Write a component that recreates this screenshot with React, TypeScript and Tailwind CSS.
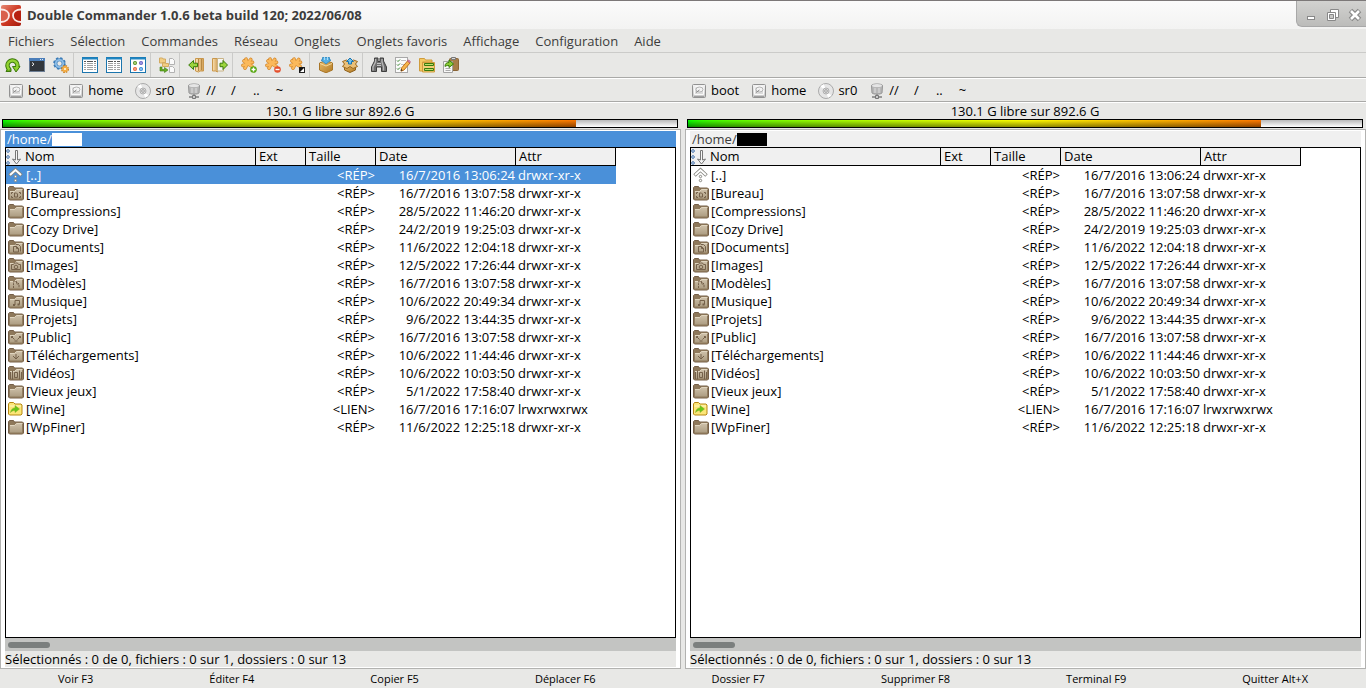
import type { ReactNode } from "react";
import clsx from "clsx";

type Entry = {
  name: string;
  size: string;
  date: string;
  attr: string;
  icon: string;
};

const dir = (name: string, date: string, icon = "plain"): Entry => ({
  name,
  size: "<RÉP>",
  date,
  attr: "drwxr-xr-x",
  icon,
});

const entries: Entry[] = [
  dir("..", "16/7/2016 13:06:24", "up"),
  dir("Bureau", "16/7/2016 13:07:58", "desktop"),
  dir("Compressions", "28/5/2022 11:46:20"),
  dir("Cozy Drive", "24/2/2019 19:25:03"),
  dir("Documents", "11/6/2022 12:04:18", "documents"),
  dir("Images", "12/5/2022 17:26:44", "pictures"),
  dir("Modèles", "16/7/2016 13:07:58", "templates"),
  dir("Musique", "10/6/2022 20:49:34", "music"),
  dir("Projets", "9/6/2022 13:44:35"),
  dir("Public", "16/7/2016 13:07:58", "public"),
  dir("Téléchargements", "10/6/2022 11:44:46", "download"),
  dir("Vidéos", "10/6/2022 10:03:50", "videos"),
  dir("Vieux jeux", "5/1/2022 17:58:40"),
  {
    name: "Wine",
    size: "<LIEN>",
    date: "16/7/2016 17:16:07",
    attr: "lrwxrwxrwx",
    icon: "link",
  },
  dir("WpFiner", "11/6/2022 12:25:18"),
];

const menus = [
  "Fichiers",
  "Sélection",
  "Commandes",
  "Réseau",
  "Onglets",
  "Onglets favoris",
  "Affichage",
  "Configuration",
  "Aide",
];

const functionKeys = [
  "Voir F3",
  "Éditer F4",
  "Copier F5",
  "Déplacer F6",
  "Dossier F7",
  "Supprimer F8",
  "Terminal F9",
  "Quitter Alt+X",
];

function Svg({ children }: { children: ReactNode }) {
  return (
    <svg width="16" height="16" viewBox="0 0 16 16" fill="none" className="block shrink-0" aria-hidden="true">
      {children}
    </svg>
  );
}

// Shared gradients for every icon on the page
function IconDefs() {
  return (
    <svg width="0" height="0" className="absolute" aria-hidden="true">
      <defs>
        <linearGradient id="folder" x1="0" y1="0" x2="0" y2="1">
          <stop offset="0" stopColor="#d0c3ac" />
          <stop offset="1" stopColor="#ab9b80" />
        </linearGradient>
        <linearGradient id="logo" x1="0" y1="0" x2="1" y2="1">
          <stop offset="0" stopColor="#e58a75" />
          <stop offset="0.5" stopColor="#cf3a24" />
          <stop offset="1" stopColor="#a51a0c" />
        </linearGradient>
        <linearGradient id="box" x1="0" y1="0" x2="1" y2="1">
          <stop offset="0" stopColor="#e9bd6b" />
          <stop offset="1" stopColor="#b27a24" />
        </linearGradient>
        <linearGradient id="metal" x1="0" y1="0" x2="0" y2="1">
          <stop offset="0" stopColor="#f5f5f5" />
          <stop offset="1" stopColor="#c4c4c4" />
        </linearGradient>
        <linearGradient id="page" x1="0" y1="0" x2="1" y2="0">
          <stop offset="0" stopColor="#fbe3b4" />
          <stop offset="1" stopColor="#d2a057" />
        </linearGradient>
      </defs>
    </svg>
  );
}

function ListIcon({ kind }: { kind: "brief" | "columns" | "thumbs" }) {
  return (
    <Svg>
      <rect x="0.5" y="0.5" width="15" height="15" fill="#fff" stroke="#1b75ad" />
      <path d="M0 1.5h16" stroke="#1f86c2" strokeWidth="2" />
      {kind === "thumbs" ? (
        <>
          <rect x="3.5" y="4.5" width="3" height="3" rx="1" fill="#a3c96a" stroke="#4d8a22" />
          <rect x="9.5" y="4.5" width="3" height="3" rx="1" fill="#9293e0" stroke="#6a5cbe" />
          <rect x="3.5" y="10.5" width="3" height="3" rx="1" fill="#f59b78" stroke="#e8603f" />
          <rect x="9.5" y="10.5" width="3" height="3" rx="1" fill="#83bdf0" stroke="#2f83d3" />
        </>
      ) : (
        <>
          <path
            d="M2 4.5h12"
            stroke="#555"
            strokeDasharray={kind === "brief" ? "2 1 6 1" : "5 1 2 1"}
          />
          <path
            d="M2 6.5h12M2 8.5h12M2 10.5h12M2 12.5h12"
            stroke="#a2a2a2"
            strokeDasharray={kind === "brief" ? "2 1 6 1" : "5 1 2 1"}
          />
        </>
      )}
    </Svg>
  );
}

function Asterisk({ children }: { children: ReactNode }) {
  return (
    <Svg>
      <path
        d="M3 4l3.500 2.500 3.200-4M2 8.500l4.500-2 5-1.200M4 11.200l2.500-4.700 4.500 2.800M5 2.200l1.500 4.300"
        stroke="#d48a30"
        strokeWidth="3.600"
        strokeLinecap="round"
      />
      <path
        d="M3 4l3.500 2.500 3.200-4M2 8.500l4.500-2 5-1.200M4 11.200l2.500-4.700 4.500 2.800M5 2.200l1.500 4.300"
        stroke="#fbb95b"
        strokeWidth="2.200"
        strokeLinecap="round"
      />
      {children}
    </Svg>
  );
}

const toolbar: { label: string; icon: ReactNode }[][] = [
  [
    {
      label: "Actualiser",
      icon: (
        <Svg>
          <path d="M4.500 12.500A5 5 0 1 1 11 12" stroke="#3d7a0c" strokeWidth="4.400" />
          <path d="M7.500 9.500H15L11 15z" fill="#86c926" stroke="#3d7a0c" />
          <path d="M1 14.500h5v-3L3 11z" fill="#68a81a" stroke="#3d7a0c" />
          <path d="M4.500 12.500A5 5 0 1 1 11 12" stroke="#92d332" strokeWidth="2.400" />
        </Svg>
      ),
    },
    {
      label: "Terminal",
      icon: (
        <Svg>
          <rect x="0.5" y="1.5" width="15" height="13" fill="#31363c" stroke="#6d7f95" />
          <path d="M0 2.5h16" stroke="#4b7eb9" strokeWidth="3" />
          <path d="M11 2.5h1M13 2.5h1" stroke="#d9e7f5" />
          <path d="m3 5.500 2 1.700-2 1.700" stroke="#f4f4f4" />
        </Svg>
      ),
    },
    {
      label: "Options",
      icon: (
        <Svg>
          <circle cx="6.500" cy="6.500" r="5" stroke="#3b7cb8" strokeWidth="2.600" strokeDasharray="2.200 1.730" />
          <circle cx="6.500" cy="6.500" r="3.700" fill="#e8e8e6" stroke="#3b7cb8" strokeWidth="3" />
          <circle cx="6.500" cy="6.500" r="3.700" stroke="#8fbfe8" strokeWidth="1.800" />
          <circle cx="12" cy="12" r="3" stroke="#c97f1c" strokeWidth="2" strokeDasharray="1.500 .86" />
          <circle cx="12" cy="12" r="2" fill="#fff4dc" stroke="#f4ac43" strokeWidth="1.800" />
        </Svg>
      ),
    },
  ],
  [
    { label: "Vue abrégée", icon: <ListIcon kind="brief" /> },
    { label: "Vue détaillée", icon: <ListIcon kind="columns" /> },
    { label: "Vignettes", icon: <ListIcon kind="thumbs" /> },
  ],
  [
    {
      label: "Vue à plat",
      icon: (
        <Svg>
          <path d="M.5 1v5h6V2H4l-.500-1zM3.500 5.500v4h6v-3h-3l-.500-1z" fill="#f2ce84" stroke="#d3ab62" />
          <path d="M10.500 1.500h3l2 2v4h-5zM10.500 9.500h3l2 2v4h-5z" fill="#fafafa" stroke="#b2b2b2" />
          <path d="M1 10h2v2.500h2.500v-2L9 13l-3.500 2.500V14H1z" fill="#65ae22" stroke="#3d7c10" strokeWidth=".6" />
        </Svg>
      ),
    },
  ],
  [
    {
      label: "Cible à gauche",
      icon: (
        <Svg>
          <path d="M7.500 1.500h8V14H12l-1.500 1-3-1z" fill="url(#page)" stroke="#c9974c" />
          <path d="M10.500 2v12M13.500 2v11" stroke="#b58844" />
          <path d="M.7 8 5.500 3.500v2.700h4v3.500h-4v2.800z" fill="#9cd53d" stroke="#3b7b0c" />
        </Svg>
      ),
    },
    {
      label: "Cible à droite",
      icon: (
        <Svg>
          <path d="M.5 1.500h5V15l-2-1h-3z" fill="url(#page)" stroke="#c9974c" />
          <path d="M5.500 1.500h6V14h-6z" fill="#f6f6f2" stroke="#c8b387" />
          <path d="M15.500 8 11 3.500v2.700H8v3.500h3v2.800z" fill="#9cd53d" stroke="#3b7b0c" />
        </Svg>
      ),
    },
  ],
  [
    {
      label: "Sélectionner un groupe",
      icon: (
        <Asterisk>
          <circle cx="12.500" cy="12.500" r="3.300" fill="#55a60e" />
          <path d="M12.500 10.500v4M10.500 12.500h4" stroke="#fff" strokeWidth="1.400" />
        </Asterisk>
      ),
    },
    {
      label: "Désélectionner un groupe",
      icon: (
        <Asterisk>
          <circle cx="12.500" cy="12.500" r="3.300" fill="#e4512e" />
          <path d="M10.500 12.500h4" stroke="#fff" strokeWidth="1.400" />
        </Asterisk>
      ),
    },
    {
      label: "Inverser la sélection",
      icon: (
        <Asterisk>
          <rect x="10.500" y="10.500" width="5" height="5" fill="#fff" stroke="#222" />
          <path d="M10.500 10.500h5l-5 5z" fill="#111" />
        </Asterisk>
      ),
    },
  ],
  [
    {
      label: "Compresser",
      icon: (
        <Svg>
          <path d="M1.500 6 8 3.500 14.500 6v7L8 15.800 1.500 13z" fill="url(#box)" stroke="#a87527" />
          <path d="M2 6.500 8 9l6-2.500" stroke="#f6d99b" />
          <path d="M4.500 .5h7V3H13L8 7 3 3h1.500z" fill="#57b1e5" stroke="#3f92c6" />
          <path d="M6.500 0v3M9.500 0v3" stroke="#a9dbf5" />
        </Svg>
      ),
    },
    {
      label: "Extraire",
      icon: (
        <Svg>
          <path d="M2.500 6.500h11V13L8 15.500 2.500 13z" fill="url(#box)" stroke="#8f601b" />
          <path d="m.5 4.500 4-1.500L8 5l3.500-2 4 1.500-2 2.500 2 2.500L11 11.500 8 9.500l-3 2-4.500-2 2-2.500z" fill="#ebc078" stroke="#9c6a20" />
          <path d="m8 1 3.500 3.500h-2V7h-3V4.500h-2z" fill="#6bc0ef" stroke="#1d73ac" />
        </Svg>
      ),
    },
  ],
  [
    {
      label: "Rechercher",
      icon: (
        <Svg>
          <path
            d="M3.500 1H7v3.500h2V1h3.500v3l3 6v4.500h-5V10h-5v4.500h-5V10l3-6z"
            fill="#707070"
            stroke="#3f3f3f"
          />
          <path d="M4.500 2v3L2 10v3.500M11 2v3l1.500 5v3.500" stroke="#b8b8b8" strokeWidth="1.300" />
          <path d="M6 6.500h4M6 8.500h4" stroke="#c6c6c6" />
        </Svg>
      ),
    },
    {
      label: "Renommer par lot",
      icon: (
        <Svg>
          <rect x=".5" y=".5" width="12" height="15" fill="#fbfbfb" stroke="#a8a8a8" />
          <path d="m2 3.500 1 1 2-2M2 7.500l1 1 2-2M2 11.500l1 1 2-2" stroke="#348129" />
          <path d="M6.500 3.500H11M6.500 7.500H9" stroke="#878787" strokeDasharray="1 1" />
          <path d="m6.500 11 6-7 2.500 2-6 7-3 1.200z" fill="#f6b64e" stroke="#c1711d" />
          <path d="m12.500 4 1-1 2 1.800-.8 1z" fill="#eb9bb3" stroke="#b95b81" />
          <path d="m6.200 12-.5 2 2-.7z" fill="#222" />
        </Svg>
      ),
    },
    {
      label: "Synchroniser",
      icon: (
        <Svg>
          <path d="M.5 1.500h5L6.500 3H13v2H3.500v9h-3z" fill="#f5c963" stroke="#cf9c3c" />
          <path d="M3.500 5.500h12V15h-12z" fill="#f2cf77" stroke="#cf9c3c" />
          <path d="M5.500 6.500h9v2h-9zM5.500 11.500h9v2h-9z" fill="#bce16e" stroke="#397b0d" />
        </Svg>
      ),
    },
    {
      label: "Copier les noms",
      icon: (
        <Svg>
          <rect x="6.500" y="1.500" width="9" height="12" rx="1" fill="#a77d48" stroke="#8a6436" />
          <path d="M8.500 .5h4v2h-4z" fill="#d8d8d8" stroke="#777" />
          <path d="M.5 4.500h9v11h-9z" fill="#f8f8f8" stroke="#a3a3a3" />
          <path d="M2.500 11.500h5M2.500 13.500h5" stroke="#aaa" />
          <path d="M2 9.500C2 6.500 3.500 5.500 6 5.500V3l4.500 4L6 10.500v-2c-2 0-3 .2-4 1z" fill="#8bcc35" stroke="#377b0b" />
        </Svg>
      ),
    },
  ],
];

function DiskIcon() {
  return (
    <Svg>
      <rect x="1.500" y="1.500" width="13" height="13" rx="1" fill="url(#metal)" stroke="#929292" />
      <path d="M3.500 11.500v-6l1-2h7l1 2v6z" fill="#dcdcdc" stroke="#fafafa" />
      <ellipse cx="8.500" cy="6.500" rx="3.500" ry="2.500" fill="#f3f3f3" stroke="#b4b4b4" />
      <path d="M5 9.500 8.500 7" stroke="#888" />
      <path d="M3 13.500h10" stroke="#a0a0a0" />
    </Svg>
  );
}

function DiscIcon() {
  return (
    <Svg>
      <circle cx="8" cy="8" r="7.500" fill="#e6e6e6" stroke="#aaa" />
      <path d="M8 8 2.500 3.500A7 7 0 0 1 6 1.300zM8 8l5.500 4.500A7 7 0 0 1 10 14.700z" fill="#fff" />
      <circle cx="8" cy="8" r="3" fill="#ddd" stroke="#b0b0b0" />
      <circle cx="8" cy="8" r="1.300" fill="#fff" stroke="#999" />
    </Svg>
  );
}

function NetworkIcon() {
  return (
    <Svg>
      <path d="M2.500 2.500c0-2 11-2 11 0L13 10c-1 1.500-9 1.500-10 0z" fill="#b8b8b8" stroke="#949494" />
      <ellipse cx="8" cy="2.500" rx="5" ry="1.500" fill="#e5e5e5" />
      <path d="M6 5v5M10 5v5" stroke="#dedede" />
      <path d="M8 11v2M3 14h10" stroke="#999" strokeWidth="2" />
      <path d="M6.500 12.500h3v3h-3z" fill="#ccc" stroke="#777" />
    </Svg>
  );
}

const folderMarks: Record<string, ReactNode> = {
  desktop: <path d="M3.500 9V7.500H5M3.500 11v1.500H5M11 7.500h1.500V9M12.500 11v1.500H11M6.500 8h2l1 1v3h-3z" />,
  documents: <path d="M7.500 5.500h3l2 2v5M5.500 7.500h3l2 2V13h-5zM8.500 7.500v2h2" />,
  pictures: (
    <>
      <path d="M3.500 7.500h2l1-1.500h3l1 1.500h2v5h-9z" />
      <circle cx="8" cy="10" r="1.800" />
    </>
  ),
  templates: <path d="M5.500 13V6.500h3l2.500 2.500v4M8.500 6.500V9H11" strokeDasharray="2 .8" />,
  music: (
    <>
      <path d="M7 12V7.500h4.500v4" />
      <path d="M5 12h2M9.500 11.500h2" strokeWidth="1.800" />
    </>
  ),
  public: <path d="M3.500 9V7.500H5M3.500 7.500l3 3M12.500 9V7.500H11M12.500 7.500l-3 3M6.500 12h3" />,
  download: <path d="M8 7v4.500M5 9l3 3 3-3" />,
  videos: <path d="M4.500 5.500v9M11.500 5.500v9M6.500 7.500h3v5h-3zM2.500 7v7M13.500 7v7" />,
};

function EntryIcon({ kind }: { kind: string }) {
  if (kind === "up") {
    return (
      <Svg>
        <path d="m1.500 8.500 6-5.500 6 5.500" stroke="#84847e" strokeWidth="3.600" />
        <path d="m2 8 5.500-5L13 8" stroke="#fff" strokeWidth="2" />
        <circle cx="7.500" cy="9.500" r="1.200" fill="#fff" stroke="#84847e" />
        <circle cx="7.500" cy="13.500" r="1.200" fill="#fff" stroke="#84847e" />
      </Svg>
    );
  }
  if (kind === "link") {
    return (
      <Svg>
        <path d="M.5 13V3l1-1.500h4L7 3h6l1 1v9l-1 1H1.500z" fill="#fce678" stroke="#b78712" />
        <path d="M1.500 5H13" stroke="#fff7c2" />
        <path
          d="M2.500 11.500C3 8.500 4.500 7 7 7V4.500L11.500 8 7 11.500v-2c-2 0-3 .5-4.500 2z"
          fill="#68c617"
          stroke="#80aa26"
          strokeWidth=".5"
        />
      </Svg>
    );
  }
  return (
    <Svg>
      <path d="M.5 14V2.500l1-1h4l1 1.500h8l1 1V14l-1 1h-13z" fill="#8e785a" stroke="#766049" />
      <path d="M1.500 14V7l1.500-1h3l2-2h6.500v10z" fill="url(#folder)" stroke="#917c5e" />
      <path d="M2 6.500h4.500l2-2h6" stroke="#e0d5bf" />
      <g stroke="#75614a">{folderMarks[kind]}</g>
    </Svg>
  );
}

function SortIcon() {
  return (
    <Svg>
      <g fill="#fff" stroke="#3c6ca8">
        <circle cx="2" cy="2" r="1.300" />
        <circle cx="2" cy="8" r="1.300" />
        <circle cx="2" cy="14" r="1.300" />
      </g>
      <path d="M9.500 1.500h2v9.500l3-1-4 5-4-5 3 1z" fill="#f6f6f6" stroke="#777" />
    </Svg>
  );
}

function Drives() {
  const drive = "flex h-5 items-center gap-1";
  return (
    <nav className="flex items-center gap-3 pt-px pl-2 text-black">
      <button className={drive}>
        <DiskIcon />
        boot
      </button>
      <button className={drive}>
        <DiskIcon />
        home
      </button>
      <button className={drive}>
        <DiscIcon />
        sr0
      </button>
      <button className={drive}>
        <NetworkIcon />
        //
      </button>
      <button className="w-[11px]">/</button>
      <button className="w-[11px]">..</button>
      <button className="w-[11px]">~</button>
    </nav>
  );
}

function FreeSpace({ free, total }: { free: number; total: number }) {
  const used = Math.floor(((total - free) / total) * 100);
  return (
    <div className="pr-[3px] pl-0.5">
      <p className="h-4 text-center leading-4">
        {free} G libre sur {total} G
      </p>
      <div className="relative h-[9px] border border-black bg-linear-to-r from-[#00ff00] via-[#ffff00] to-[#ff1400]">
        <div className="absolute inset-0 bg-linear-to-b from-black/0 to-black/45" />
        <div
          className="absolute inset-y-0 right-0 bg-linear-to-b from-[#b9b9b9] to-white"
          style={{ width: `${100 - used}%` }}
        />
      </div>
    </div>
  );
}

function FilePanel({ active = false }: { active?: boolean }) {
  const cell = "h-[18px] truncate p-0 leading-[18px]";
  const head = "h-[18px] border-r border-b border-black p-0 pl-[3px] text-left leading-[17px] font-normal";
  return (
    <section className="flex min-h-0 min-w-0 flex-col border border-[#b2b2b0] bg-white px-1 py-px">
      <div
        className={clsx(
          "flex h-4 shrink-0 items-center pl-0.5 leading-4",
          active ? "bg-[#4a90d9] text-white" : "bg-[#f0f0f0] text-[#3c3c3c]"
        )}
      >
        /home/
        <span className={clsx("h-[13px] w-[30px]", active ? "bg-white" : "bg-black")} />
      </div>

      <div className="min-h-0 flex-1 overflow-hidden border border-black bg-white">
        <table className="w-[610px] table-fixed border-separate border-spacing-0">
          <colgroup>
            <col className="w-[250px]" />
            <col className="w-[50px]" />
            <col className="w-[70px]" />
            <col className="w-[140px]" />
            <col className="w-[100px]" />
          </colgroup>
          <thead className="bg-[#f0f0f0]">
            <tr>
              <th className="h-[18px] border-r border-b border-black p-0 text-left leading-[17px] font-normal">
                <div className="flex items-center gap-[3px]">
                  <SortIcon />
                  Nom
                </div>
              </th>
              <th className={head}>Ext</th>
              <th className={head}>Taille</th>
              <th className={head}>Date</th>
              <th className={head}>Attr</th>
            </tr>
          </thead>
          <tbody>
            {entries.map((entry, i) => (
              <tr key={entry.name} className={clsx(active && i === 0 && "bg-[#4a90d9] text-white")}>
                <td className={cell}>
                  <div className="flex items-center gap-0.5 pl-0.5">
                    <EntryIcon kind={entry.icon} />[{entry.name}]
                  </div>
                </td>
                <td className={cell} />
                <td className={clsx(cell, "pr-px text-right")}>{entry.size}</td>
                <td className={clsx(cell, "pr-px text-right")}>{entry.date}</td>
                <td className={clsx(cell, "pl-0.5")}>{entry.attr}</td>
              </tr>
            ))}
          </tbody>
        </table>
      </div>

      <div className="flex h-[13px] shrink-0 items-center bg-[#c3c4c2] pl-[3px]">
        <div className="h-1.5 w-[42px] rounded-full bg-[#7b7f7e]" />
      </div>
      <p className="h-4 shrink-0 truncate bg-[#e8e8e6] leading-4">
        Sélectionnés : 0 de 0, fichiers : 0 sur 1, dossiers : 0 sur 13
      </p>
    </section>
  );
}

export default function App() {
  return (
    <div className="flex h-screen flex-col overflow-hidden bg-[#e8e8e6] font-['Open_Sans','Noto_Sans',sans-serif] text-[13px] whitespace-nowrap text-black">
      <IconDefs />

      {/* Title bar */}
      <header className="flex h-[29px] shrink-0 items-start justify-between border-t border-[#7c7878] bg-linear-to-b from-[#fbfbfb] to-[#f3f3f2]">
        <div className="flex h-7 items-center gap-[5px] pt-0.5">
          <svg width="22" height="22" viewBox="0 0 22 22" fill="none" aria-hidden="true">
            <rect x="1" y="0" width="20" height="21" rx="2" fill="url(#logo)" />
            <path d="M1 4.500c5 0 8 2.500 8 6s-3 6.500-8 6.500" fill="#d9614c" stroke="#fbe9e6" strokeWidth="1.800" />
            <path d="M21 4.500c-5 0-8 2.500-8 6s3 6.500 8 6.500" fill="#b8200f" stroke="#fbe9e6" strokeWidth="1.800" />
          </svg>
          <h1 className="font-bold text-[#3c3c3c]">Double Commander 1.0.6 beta build 120; 2022/06/08</h1>
        </div>
        <div className="flex h-[26px] w-[70px] items-center justify-end gap-1.5 rounded-bl-md border-b border-l border-[#a8a8a8] bg-linear-to-b from-[#d2d2d0] to-[#bcbcba] pt-0.5 pr-[3px]">
          <button aria-label="Réduire">
            <Svg>
              <rect x="4.500" y="9.500" width="7" height="3" fill="#fff" stroke="#888" />
            </Svg>
          </button>
          <button aria-label="Restaurer">
            <Svg>
              <path d="M5.500 2.500h8v8h-8z" fill="#fff" stroke="#888" />
              <path d="M2.500 5.500h8v8h-8z" fill="#fff" stroke="#888" />
              <path d="M4.500 7.500h4v4h-4z" fill="#c7c7c5" stroke="#888" />
            </Svg>
          </button>
          <button aria-label="Fermer">
            <Svg>
              <path d="m3.500 3.500 9 9M12.500 3.500l-9 9" stroke="#888" strokeWidth="5" />
              <path d="m4 4 8 8M12 4l-8 8" stroke="#fff" strokeWidth="2.600" />
            </Svg>
          </button>
        </div>
      </header>

      <nav className="flex h-6 shrink-0 items-center gap-4 border-b border-[#cbcbc9] pt-0.5 pl-2 text-[#3c3c3c]">
        {menus.map((menu) => (
          <button key={menu}>{menu}</button>
        ))}
      </nav>

      {/* Toolbar */}
      <div className="flex h-[25px] shrink-0 items-stretch border-b border-[#a9a9a7] pl-px shadow-[0_1px_0_#fff]">
        {toolbar.map((group, i) => (
          <div key={group[0].label} className={clsx("flex", i > 0 && "border-l border-[#cbcbc9] pl-1")}>
            {group.map((tool) => (
              <button key={tool.label} aria-label={tool.label} className="flex w-6 items-center justify-center">
                {tool.icon}
              </button>
            ))}
          </div>
        ))}
      </div>

      <div className="grid h-6 shrink-0 grid-cols-2 items-center border-b border-[#a9a9a7] pt-px shadow-[0_1px_0_#fff]">
        <Drives />
        <Drives />
      </div>

      <div className="grid shrink-0 grid-cols-2 gap-1 pt-px pb-px">
        <FreeSpace free={130.1} total={892.6} />
        <FreeSpace free={130.1} total={892.6} />
      </div>

      <main className="grid min-h-0 flex-1 grid-cols-2 grid-rows-1 gap-1">
        <FilePanel active />
        <FilePanel />
      </main>

      {/* Function keys */}
      <footer className="flex h-[19px] shrink-0 pt-0.5 text-[11px]">
        {functionKeys.map((key) => (
          <button key={key} className="flex-auto">
            {key}
          </button>
        ))}
      </footer>
    </div>
  );
}
